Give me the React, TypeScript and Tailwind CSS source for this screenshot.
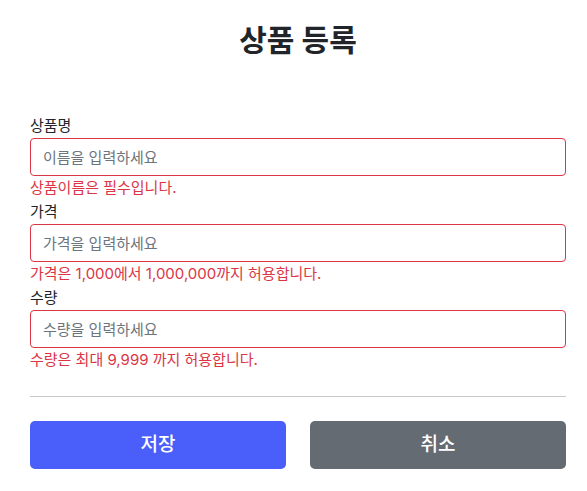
const fields = [
  { label: '상품명', placeholder: '이름을 입력하세요', error: '상품이름은 필수입니다.' },
  { label: '가격', placeholder: '가격을 입력하세요', error: '가격은 1,000에서 1,000,000까지 허용합니다.' },
  { label: '수량', placeholder: '수량을 입력하세요', error: '수량은 최대 9,999 까지 허용합니다.' },
]

export default function App() {
  return (
    <main className="min-h-screen bg-white pl-[30px] pr-[21px] text-[#212529] font-['Inter','Noto_Sans_CJK_KR',sans-serif]">
      {/* Title */}
      <div className="pt-[21px] text-center">
        <h2 className="text-[30px] font-bold leading-[38px]">상품 등록</h2>
      </div>

      {/* Form */}
      <form className="mt-[55px]">
        {fields.map((f) => (
          <div key={f.label}>
            <label className="block text-[15px] leading-[24px]">{f.label}</label>
            <input
              type="text"
              placeholder={f.placeholder}
              className="block w-full h-[38px] px-3 rounded-[4px] border border-[#dc3545] text-[15px] outline-none placeholder:text-[#6c757d]"
            />
            <div className="text-[15px] leading-[24px] text-[#dc3545]">{f.error}</div>
          </div>
        ))}

        <hr className="mt-6 mb-6 border-t border-[#c8c8c8]" />

        <div className="grid grid-cols-2 gap-6">
          <button type="button" className="h-[48px] rounded-[5px] bg-[#4a5ef9] text-white text-[19px] font-medium">
            저장
          </button>
          <button type="button" className="h-[48px] rounded-[5px] bg-[#646b73] text-white text-[19px] font-medium">
            취소
          </button>
        </div>
      </form>
    </main>
  )
}
